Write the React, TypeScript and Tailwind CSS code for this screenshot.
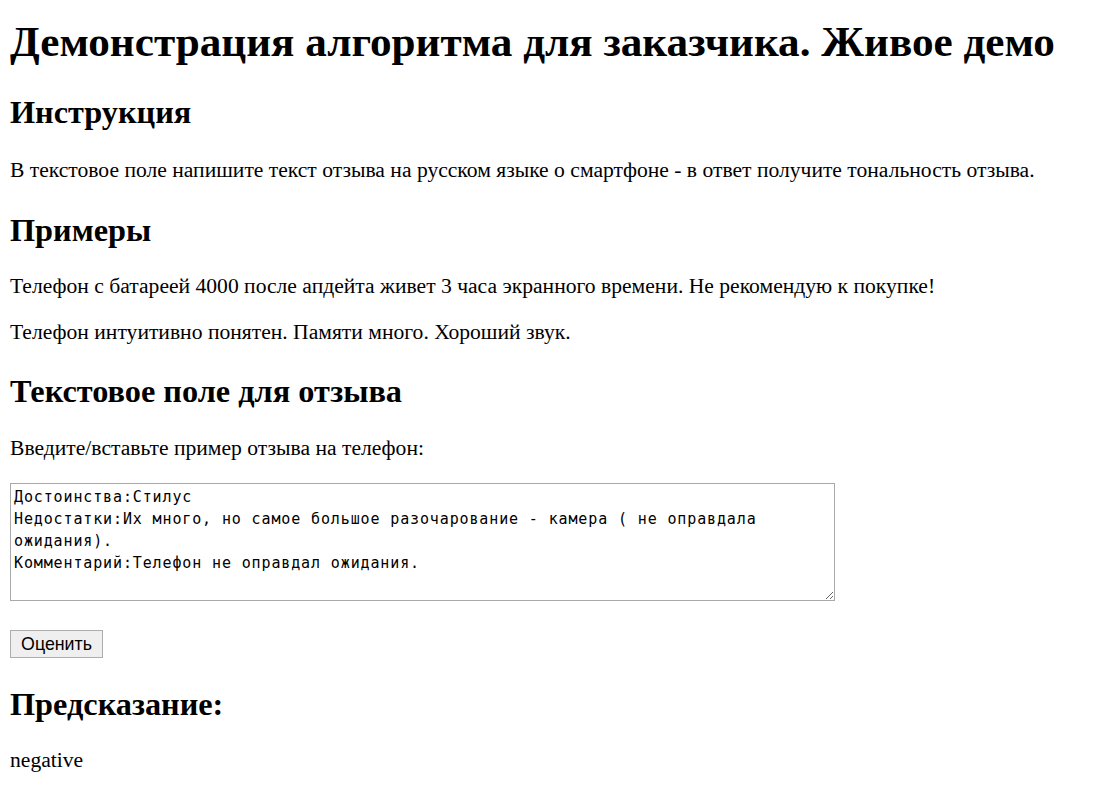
const serif = "font-['Liberation_Serif','Times_New_Roman',serif]";

export default function App() {
  const review =
    "Достоинства:Стилус\nНедостатки:Их много, но самое большое разочарование - камера ( не оправдала ожидания).\nКомментарий:Телефон не оправдал ожидания.";

  return (
    <div className={`${serif} flex flex-col items-start bg-white px-[10px] pb-[20px] text-black`}>
      <h1 className="mt-[19px] text-[43.2px] font-bold leading-[46px]">Демонстрация алгоритма для заказчика. Живое демо</h1>

      <h2 className="mt-[31px] text-[32.3px] font-bold leading-[32px]">Инструкция</h2>
      <p className="mt-[30px] text-[21.6px] leading-[24px]">
        В текстовое поле напишите текст отзыва на русском языке о смартфоне - в ответ получите тональность отзыва.
      </p>

      <h2 className="mt-[32px] text-[32.3px] font-bold leading-[32px]">Примеры</h2>
      <p className="mt-[28px] text-[21.6px] leading-[24px]">
        Телефон с батареей 4000 после апдейта живет 3 часа экранного времени. Не рекомендую к покупке!
      </p>
      <p className="mt-[22px] text-[21.6px] leading-[24px]">Телефон интуитивно понятен. Памяти много. Хороший звук.</p>

      <h2 className="mt-[31px] text-[32.3px] font-bold leading-[32px]">Текстовое поле для отзыва</h2>
      <p className="mt-[29px] text-[21.6px] leading-[24px]">Введите/вставьте пример отзыва на телефон:</p>

      <textarea
        defaultValue={review}
        className="mt-[23px] h-[118px] w-[825px] border border-[#a9a9a9] bg-white px-[3px] pt-[2px] font-['DejaVu_Sans_Mono',monospace] text-[15px] leading-[22px] tracking-[0.87px] text-black outline-none"
      />

      <button
        type="button"
        className="mt-[29px] h-[28px] w-[93px] border border-[#adadad] bg-[#efefef] font-['Liberation_Sans',Arial,sans-serif] text-[17.8px] leading-[20px] text-black"
      >
        Оценить
      </button>

      <h2 className="mt-[30px] text-[32.3px] font-bold leading-[32px]">Предсказание:</h2>
      <p className="mt-[28px] text-[21.6px] leading-[24px]">negative</p>
    </div>
  );
}
